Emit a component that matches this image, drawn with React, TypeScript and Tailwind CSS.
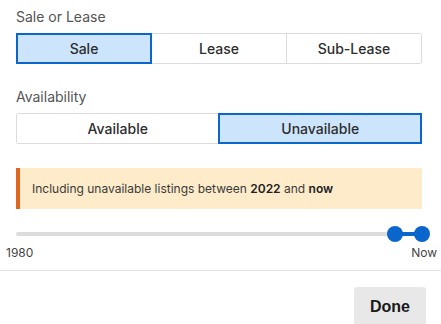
import React, { useState } from 'react';

const saleOptions = ['Sale', 'Lease', 'Sub-Lease'];
const availabilityOptions = ['Available', 'Unavailable'];

function Segmented({
  options,
  value,
  onChange,
}: {
  options: string[];
  value: string;
  onChange: (v: string) => void;
}) {
  return (
    <div className="flex h-[31px] rounded-[2px] border border-[#dcdcdc]">
      {options.map((opt, idx) => {
        const active = opt === value;
        return (
          <button
            key={opt}
            onClick={() => onChange(opt)}
            className={`flex-1 flex items-center justify-center text-[14px] font-medium text-[#2d2d2d] ${
              idx > 0 ? 'border-l border-[#dcdcdc]' : ''
            } ${
              active
                ? 'bg-[#cde5fc] outline-2 outline-[#0a66cc] -outline-offset-1 relative z-10'
                : 'bg-white'
            }`}
          >
            {opt}
          </button>
        );
      })}
    </div>
  );
}

export default function App() {
  const [sale, setSale] = useState('Sale');
  const [availability, setAvailability] = useState('Unavailable');

  return (
    <div className="w-[441px] h-[324px] overflow-hidden bg-white font-['Inter',sans-serif]">
      <div className="pl-4 pr-[19px] pt-[7px]">
        {/* Sale or Lease */}
        <p className="text-[14px] leading-5 text-[#555]">Sale or Lease</p>
        <div className="mt-[6px]">
          <Segmented options={saleOptions} value={sale} onChange={setSale} />
        </div>

        {/* Availability */}
        <p className="mt-[23px] text-[14px] leading-5 text-[#555]">Availability</p>
        <div className="mt-[6px]">
          <Segmented options={availabilityOptions} value={availability} onChange={setAvailability} />
        </div>

        {/* Notice */}
        <div className="mt-[24px] h-[41px] flex items-center border-l-4 border-[#e0651f] bg-[#fdebc9] pl-3 text-[12px] text-[#3a3a3a]">
          <span>
            Including unavailable listings between <b className="font-semibold text-[#222]">2022</b> and{' '}
            <b className="font-semibold text-[#222]">now</b>
          </span>
        </div>

        {/* Year slider */}
        <div className="relative mt-[23px] h-[4px] rounded-full bg-[#dcdcdc]">
          <div className="absolute left-[379px] right-0 top-0 h-[4px] bg-[#0a66cc]" />
          <div className="absolute left-[371px] top-[-6px] w-4 h-4 rounded-full bg-[#0a66cc]" />
          <div className="absolute left-[398px] top-[-6px] w-4 h-4 rounded-full bg-[#0a66cc]" />
        </div>
      </div>
      <div className="flex justify-between pl-[6px] pr-[4px] mt-[9px] text-[12px] leading-4 text-[#444]">
        <span>1980</span>
        <span>Now</span>
      </div>

      <div className="mt-[9px] border-t border-[#e2e2e2]" />

      <div className="flex justify-end pr-[15px] pt-4">
        <button className="w-[72px] h-[40px] rounded-[3px] bg-[#e8e8e8] font-['Liberation_Sans',sans-serif] text-[16px] font-bold text-[#1a1a1a]">
          Done
        </button>
      </div>
    </div>
  );
}
